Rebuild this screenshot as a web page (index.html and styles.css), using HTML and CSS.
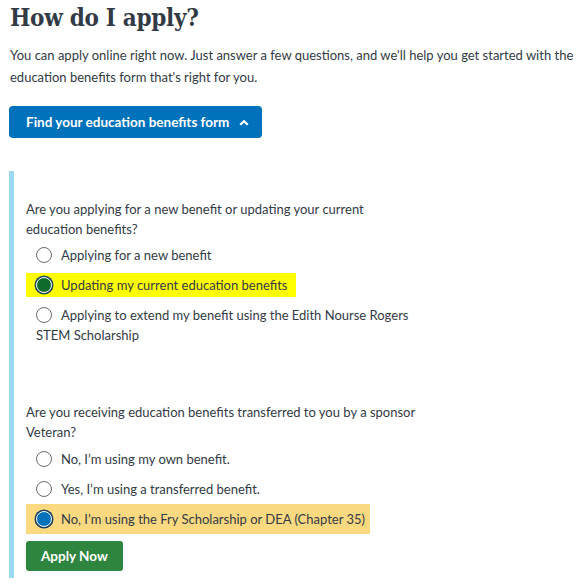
FILE: index.html
```html
<!DOCTYPE html>
<html>
<head>
<meta charset="utf-8">
<link rel="stylesheet" href="styles.css">
</head>
<body>
<main class="page">
  <h1 class="title">How do I apply?</h1>
  <p class="intro">You can apply online right now. Just answer a few questions, and we'll help you get started with the<br>education benefits form that's right for you.</p>
  <button class="find-btn">Find your education benefits form
    <svg class="caret" width="10" height="7" viewBox="0 0 10 7"><path d="M1.2 5.8 L5 2.2 L8.8 5.8" fill="none" stroke="#fff" stroke-width="2.2"/></svg>
  </button>
  <section class="wizard">
    <fieldset class="question q1">
      <legend class="legend">Are you applying for a new benefit or updating your current<br>education benefits?</legend>
      <div class="option"><span class="radio"></span><span class="label">Applying for a new benefit</span></div>
      <div class="option hl-yellow"><span class="radio radio-green"></span><span class="label">Updating my current education benefits</span></div>
      <div class="option wrap"><span class="label"><span class="radio inline"></span>Applying to extend my benefit using the Edith Nourse Rogers<br>STEM Scholarship</span></div>
    </fieldset>
    <fieldset class="question q2">
      <legend class="legend">Are you receiving education benefits transferred to you by a sponsor<br>Veteran?</legend>
      <div class="option"><span class="radio"></span><span class="label">No, I’m using my own benefit.</span></div>
      <div class="option"><span class="radio"></span><span class="label">Yes, I’m using a transferred benefit.</span></div>
      <div class="option hl-orange"><span class="radio radio-blue"></span><span class="label">No, I’m using the Fry Scholarship or DEA (Chapter 35)</span></div>
    </fieldset>
    <button class="apply-btn">Apply Now</button>
  </section>
</main>
</body>
</html>
```
FILE: styles.css
```css
html, body {
  margin: 0;
  padding: 0;
  background: #fff;
}
.page {
  padding: 0 0 0 9px;
  font-family: Lato, "Liberation Sans", sans-serif;
  color: #323a45;
}
.title {
  margin: 0;
  padding-left: 1px;
  font-family: "DejaVu Serif Condensed", "DejaVu Serif", serif;
  font-weight: bold;
  font-size: 24px;
  letter-spacing: -0.3px;
  line-height: 36px;
  color: #323a45;
}
.intro {
  margin: 8px 0 0 1px;
  font-size: 13px;
  line-height: 22px;
  white-space: nowrap;
}
.find-btn {
  margin-top: 18px;
  display: flex;
  align-items: center;
  gap: 10px;
  height: 32px;
  padding: 0 13px 0 17px;
  background: #0071bb;
  color: #fff;
  border: none;
  border-radius: 4px;
  font-family: Lato, "Liberation Sans", sans-serif;
  font-weight: bold;
  font-size: 13.5px;
}
.caret {
  display: block;
  margin-top: 1px;
}
.wizard {
  margin-top: 33px;
  border-left: 5px solid #9bdaf1;
  padding: 28px 0 7px 12px;
}
.question {
  border: none;
  margin: 0;
  padding: 0;
  width: 420px;
  min-width: 0;
}
.q2 {
  margin-top: 57px;
}
.legend {
  padding: 0;
  font-size: 13px;
  line-height: 20px;
  margin-bottom: 1px;
  white-space: nowrap;
}
.q2 .legend {
  margin-bottom: 2px;
}
.option {
  display: flex;
  align-items: center;
  height: 30px;
  padding-left: 10px;
  font-size: 13px;
  white-space: nowrap;
}
.option .radio {
  flex: none;
  margin-right: 9px;
}
.radio {
  width: 16px;
  height: 16px;
  box-sizing: border-box;
  border-radius: 50%;
  border: 1px solid #6b6b6b;
  background: #fff;
}
.radio.inline {
  display: inline-block;
  vertical-align: -3px;
  margin-right: 9px;
}
.radio-green {
  border: 1.5px solid #fff;
  background: #0e6b2c;
  box-shadow: 0 0 0 1.5px #1e4a5a;
}
.radio-blue {
  border: 1.5px solid #fff;
  background: #0071bb;
  box-shadow: 0 0 0 1.5px #163d5c;
}
.option.wrap {
  height: auto;
  display: block;
  padding-top: 5px;
  line-height: 20px;
}
.hl-yellow {
  background: linear-gradient(#ffff00, #ffff00) no-repeat 0 3px / 270px 24px;
}
.hl-orange {
  background: #fad980;
  width: 334px;
}
.apply-btn {
  margin-top: 7px;
  height: 30px;
  padding: 0 15px;
  background: #2e8540;
  color: #fff;
  border: none;
  border-radius: 3px;
  font-family: Lato, "Liberation Sans", sans-serif;
  font-weight: bold;
  font-size: 13.5px;
}
```
